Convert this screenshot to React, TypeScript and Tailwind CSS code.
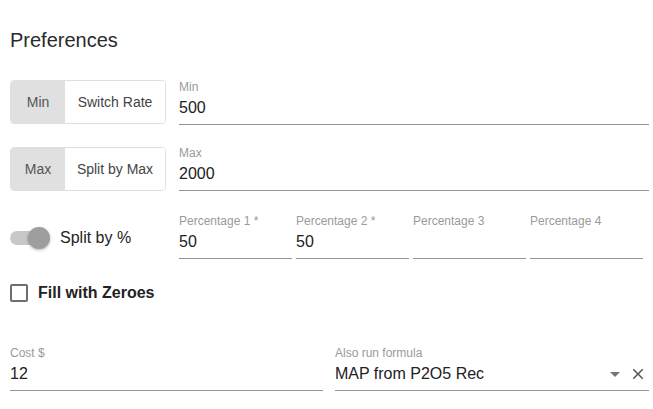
import React from "react";

const font = { fontFamily: '"Liberation Sans", Arial, sans-serif' };

const Field = ({
  label,
  value,
  className = "",
  children,
}: {
  label: string;
  value?: string;
  className?: string;
  children?: React.ReactNode;
}) => (
  <div className={`flex flex-col border-b border-[#949494] pb-[6px] ${className}`}>
    <div className="h-[14px] text-[12px] leading-[14px] text-[#9a9a9a]">{label}</div>
    <div className="mt-[4px] flex h-[20px] items-center text-[16px] leading-[20px] text-[#212121]">
      <span className="flex-1">{value}</span>
      {children}
    </div>
  </div>
);

const ToggleGroup = ({ selected, other }: { selected: string; other: string }) => (
  <div className="flex h-[44px] w-[156px] shrink-0 overflow-hidden rounded-[4px] border border-[#e0e0e0] text-[14px]">
    <div className="flex w-[54px] items-center justify-center bg-[#e0e0e0] text-[#555]">
      {selected}
    </div>
    <div className="flex flex-1 items-center justify-center bg-white text-[#444]">{other}</div>
  </div>
);

export default function App() {
  return (
    <div className="min-h-screen w-full bg-white" style={font}>
      <div className="w-[649px] pl-[10px] pt-[28px]">
        <h1 className="h-[24px] text-[20px] font-normal leading-[24px] text-[#2a2a2a]">Preferences</h1>

        <div className="mt-[28px] flex items-start gap-[13px]">
          <ToggleGroup selected="Min" other="Switch Rate" />
          <Field label="Min" value="500" className="flex-1" />
        </div>

        <div className="mt-[21px] flex items-start gap-[13px]">
          <div className="mt-[1px]">
            <ToggleGroup selected="Max" other="Split by Max" />
          </div>
          <Field label="Max" value="2000" className="flex-1" />
        </div>

        <div className="mt-[23px] flex items-start">
          <div className="flex h-[45px] w-[169px] shrink-0 items-center pt-[2px]">
            <div className="relative h-[14px] w-[34px] rounded-full bg-[#c8c8c8]">
              <div className="absolute left-[18px] top-[-4px] h-[22px] w-[22px] rounded-full bg-[#9e9e9e] shadow-[0_1px_3px_rgba(0,0,0,0.3)]" />
            </div>
            <span className="ml-[16px] text-[16px] text-[#222]">Split by %</span>
          </div>
          <div className="flex gap-[4px]">
            <Field label="Percentage 1 *" value="50" className="w-[113px]" />
            <Field label="Percentage 2 *" value="50" className="w-[113px]" />
            <Field label="Percentage 3" className="w-[113px]" />
            <Field label="Percentage 4" className="w-[113px]" />
          </div>
        </div>

        <div className="mt-[22px] flex h-[24px] items-center">
          <div className="h-[18px] w-[18px] rounded-[2px] border-2 border-[#6e6e6e]" />
          <span className="ml-[10px] text-[16px] font-bold text-[#222]">Fill with Zeroes</span>
        </div>

        <div className="mt-[41px] flex items-start gap-[12px]">
          <Field label="Cost $" value="12" className="w-[313px]" />
          <Field label="Also run formula" value="MAP from P2O5 Rec" className="flex-1">
            <svg viewBox="0 0 24 24" className="h-[24px] w-[24px] fill-[#757575]">
              <path d="M7 10l5 5 5-5z" />
            </svg>
            <svg viewBox="0 0 24 24" className="ml-[2px] mr-[2px] h-[18px] w-[18px] fill-[#555]">
              <path d="M19 6.41L17.59 5 12 10.59 6.41 5 5 6.41 10.59 12 5 17.59 6.41 19 12 13.41 17.59 19 19 17.59 13.41 12z" />
            </svg>
          </Field>
        </div>
      </div>
    </div>
  );
}
